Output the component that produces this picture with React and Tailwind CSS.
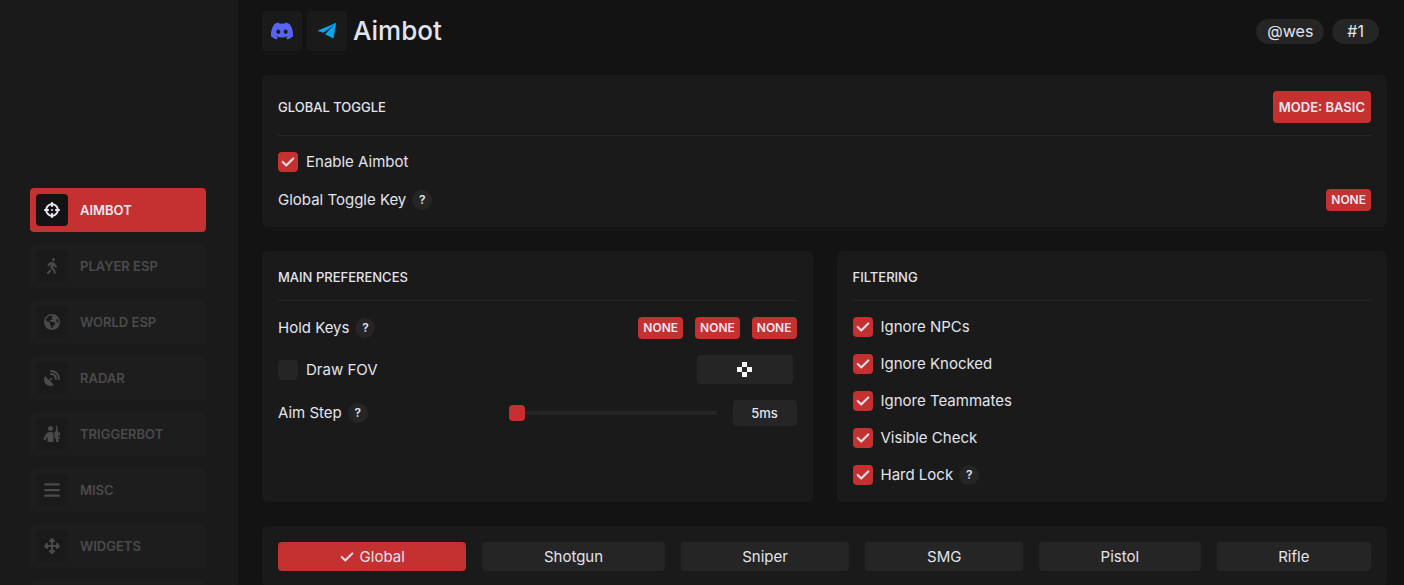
import { useState } from 'react'
import clsx from 'clsx'
import {
  FaBars,
  FaCheck,
  FaCrosshairs,
  FaDiscord,
  FaEarthAmericas,
  FaPersonRifle,
  FaPersonWalking,
  FaSatelliteDish,
  FaUpDownLeftRight,
} from 'react-icons/fa6'

const navItems = [
  { label: 'AIMBOT', icon: FaCrosshairs },
  { label: 'PLAYER ESP', icon: FaPersonWalking },
  { label: 'WORLD ESP', icon: FaEarthAmericas },
  { label: 'RADAR', icon: FaSatelliteDish },
  { label: 'TRIGGERBOT', icon: FaPersonRifle, size: 18 },
  { label: 'MISC', icon: FaBars, size: 18 },
  { label: 'WIDGETS', icon: FaUpDownLeftRight },
]

const filters = [
  { label: 'Ignore NPCs' },
  { label: 'Ignore Knocked' },
  { label: 'Ignore Teammates' },
  { label: 'Visible Check' },
  { label: 'Hard Lock', help: true },
]

const weapons = ['Global', 'Shotgun', 'Sniper', 'SMG', 'Pistol', 'Rifle']

function Sidebar() {
  const [active, setActive] = useState('AIMBOT')

  return (
    <aside className="sticky top-0 h-screen w-[238px] shrink-0 overflow-hidden bg-[#1a1a1a] pt-47 pr-8 pl-[30px]">
      <nav className="flex flex-col gap-3">
        {navItems.map(({ label, icon: Icon, size = 16 }) => (
          <button
            key={label}
            type="button"
            onClick={() => setActive(label)}
            className={clsx(
              'flex h-11 shrink-0 items-center gap-3 rounded px-1.5 text-[13px] font-semibold',
              active === label ? 'bg-[#c53030] text-[#e8e8f4]' : 'bg-[#1d1d1d] text-[#4a4a4c]'
            )}
          >
            <span
              className={clsx(
                'flex size-8 items-center justify-center rounded',
                active === label ? 'bg-[#131313]' : 'bg-[#1a1a1a]'
              )}
            >
              <Icon size={size} />
            </span>
            {label}
          </button>
        ))}
        <div className="h-11 shrink-0 rounded bg-[#1d1d1d]" />
      </nav>
    </aside>
  )
}

function TelegramIcon() {
  return (
    <svg width="20" height="18" viewBox="-1 -1 20 18" fill="#03a9f4" stroke="#03a9f4">
      <g strokeWidth="0.7" strokeLinejoin="round">
        <path d="M0.2 7.8 17.6 0.5 5.4 9.3z" />
        <path d="M17.6 0.5 15.2 15 7.6 11.2z" />
      </g>
    </svg>
  )
}

function Card({ title, action, className, children }) {
  return (
    <section className={clsx('rounded-md bg-[#1a1a1a] px-4', className)}>
      <div className="flex items-center justify-between border-b border-[#252525] pt-4 pb-3">
        <h2 className="text-[13px] leading-[21px] font-medium">{title}</h2>
        {action}
      </div>
      {children}
    </section>
  )
}

function Help() {
  return (
    <span className="flex size-5 items-center justify-center rounded-full bg-[#252525] text-xs font-semibold">
      ?
    </span>
  )
}

function Checkbox({ label, defaultChecked = false }) {
  return (
    <label className="flex h-5 items-center gap-2">
      <span className="grid size-5 place-items-center">
        <input
          type="checkbox"
          defaultChecked={defaultChecked}
          className="peer col-start-1 row-start-1 size-5 appearance-none rounded bg-[#252525] checked:bg-[#c53030]"
        />
        <FaCheck
          size={14}
          stroke="currentColor"
          strokeWidth={20}
          className="pointer-events-none invisible col-start-1 row-start-1 peer-checked:visible"
        />
      </span>
      {label}
    </label>
  )
}

function KeyButton() {
  return (
    <button
      type="button"
      className="h-[22px] rounded bg-[#c53030] px-[5px] text-xs font-semibold text-[#e8e8f4]"
    >
      NONE
    </button>
  )
}

function Header() {
  return (
    <header className="flex items-center pr-2">
      <a href="#discord" className="flex size-10 items-center justify-center rounded bg-[#1a1a1a]">
        <FaDiscord size={24} className="text-[#5865f2]" />
      </a>
      <a
        href="#telegram"
        className="ml-[5px] flex size-10 items-center justify-center rounded bg-[#1a1a1a]"
      >
        <TelegramIcon />
      </a>
      <h1 className="ml-1.5 text-[26px] leading-10 font-medium">Aimbot</h1>
      <div className="ml-auto flex gap-2 text-base leading-[25px]">
        <span className="rounded-full bg-[#252525] px-[11px]">@wes</span>
        <span className="rounded-full bg-[#252525] px-[15px]">#1</span>
      </div>
    </header>
  )
}

function MainPreferences() {
  const [step, setStep] = useState(5)

  return (
    <Card title="MAIN PREFERENCES">
      <div className="mt-4 flex h-[22px] items-center justify-between">
        <div className="flex items-center gap-1.5">
          Hold Keys
          <Help />
        </div>
        <div className="flex gap-3">
          <KeyButton />
          <KeyButton />
          <KeyButton />
        </div>
      </div>

      <div className="mt-4 flex items-center justify-between pr-1">
        <Checkbox label="Draw FOV" />
        <button
          type="button"
          className="flex h-[29px] w-24 items-center justify-center rounded bg-[#252525]"
        >
          <svg width="15" height="15" viewBox="0 0 15 15" fill="#f4f4f4" shapeRendering="crispEdges">
            <path d="M5 0h5v5H5zM0 5h5v5H0zM10 5h5v5h-5zM5 10h5v5H5z" />
          </svg>
        </button>
      </div>

      <div className="mt-4 flex items-center">
        <label htmlFor="aim-step" className="mr-1.5">
          Aim Step
        </label>
        <Help />
        <input
          id="aim-step"
          type="range"
          min="5"
          max="100"
          value={step}
          onChange={(e) => setStep(Number(e.target.value))}
          className="ml-auto h-1 w-2/5 appearance-none bg-[#252525] [&::-webkit-slider-thumb]:size-4 [&::-webkit-slider-thumb]:appearance-none [&::-webkit-slider-thumb]:rounded [&::-webkit-slider-thumb]:bg-[#c53030]"
        />
        <output
          htmlFor="aim-step"
          className="ml-4 w-16 rounded bg-[#252525] text-center text-[13px] leading-[26px] font-medium"
        >
          {step}ms
        </output>
      </div>
    </Card>
  )
}

function WeaponTabs() {
  const [weapon, setWeapon] = useState('Global')

  return (
    <section className="flex gap-4 rounded-md bg-[#1a1a1a] p-4">
      {weapons.map((name) => (
        <button
          key={name}
          type="button"
          onClick={() => setWeapon(name)}
          className={clsx(
            'flex h-[29px] flex-auto items-center justify-center gap-1.5 rounded px-4',
            weapon === name ? 'bg-[#c53030]' : 'bg-[#252525]'
          )}
        >
          {weapon === name && <FaCheck size={14} stroke="currentColor" strokeWidth={20} />}
          {name}
        </button>
      ))}
    </section>
  )
}

export default function App() {
  return (
    <div className="flex h-screen overflow-hidden bg-[#131313] font-['Inter',sans-serif] text-[15px] leading-5 text-[#e2e4ee]">
      <Sidebar />
      <main className="min-w-0 flex-1 pt-[11px] pr-[17px] pl-6">
        <Header />

        <div className="mt-6 flex flex-col gap-6">
          <Card
            title="GLOBAL TOGGLE"
            className="pb-4"
            action={
              <button
                type="button"
                className="h-8 rounded bg-[#c53030] px-1.5 text-[13px] font-semibold text-[#e8e8f4]"
              >
                MODE: BASIC
              </button>
            }
          >
            <div className="mt-4">
              <Checkbox label="Enable Aimbot" defaultChecked />
            </div>
            <div className="mt-[17px] flex items-center justify-between">
              <div className="flex items-center gap-1.5">
                Global Toggle Key
                <Help />
              </div>
              <KeyButton />
            </div>
          </Card>

          <div className="grid grid-cols-2 gap-6">
            <MainPreferences />
            <Card title="FILTERING" className="pb-[17px]">
              <div className="mt-4 flex flex-col gap-[17px]">
                {filters.map(({ label, help }) => (
                  <div key={label} className="flex items-center gap-1.5">
                    <Checkbox label={label} defaultChecked />
                    {help && <Help />}
                  </div>
                ))}
              </div>
            </Card>
          </div>

          <WeaponTabs />
        </div>
      </main>
    </div>
  )
}
